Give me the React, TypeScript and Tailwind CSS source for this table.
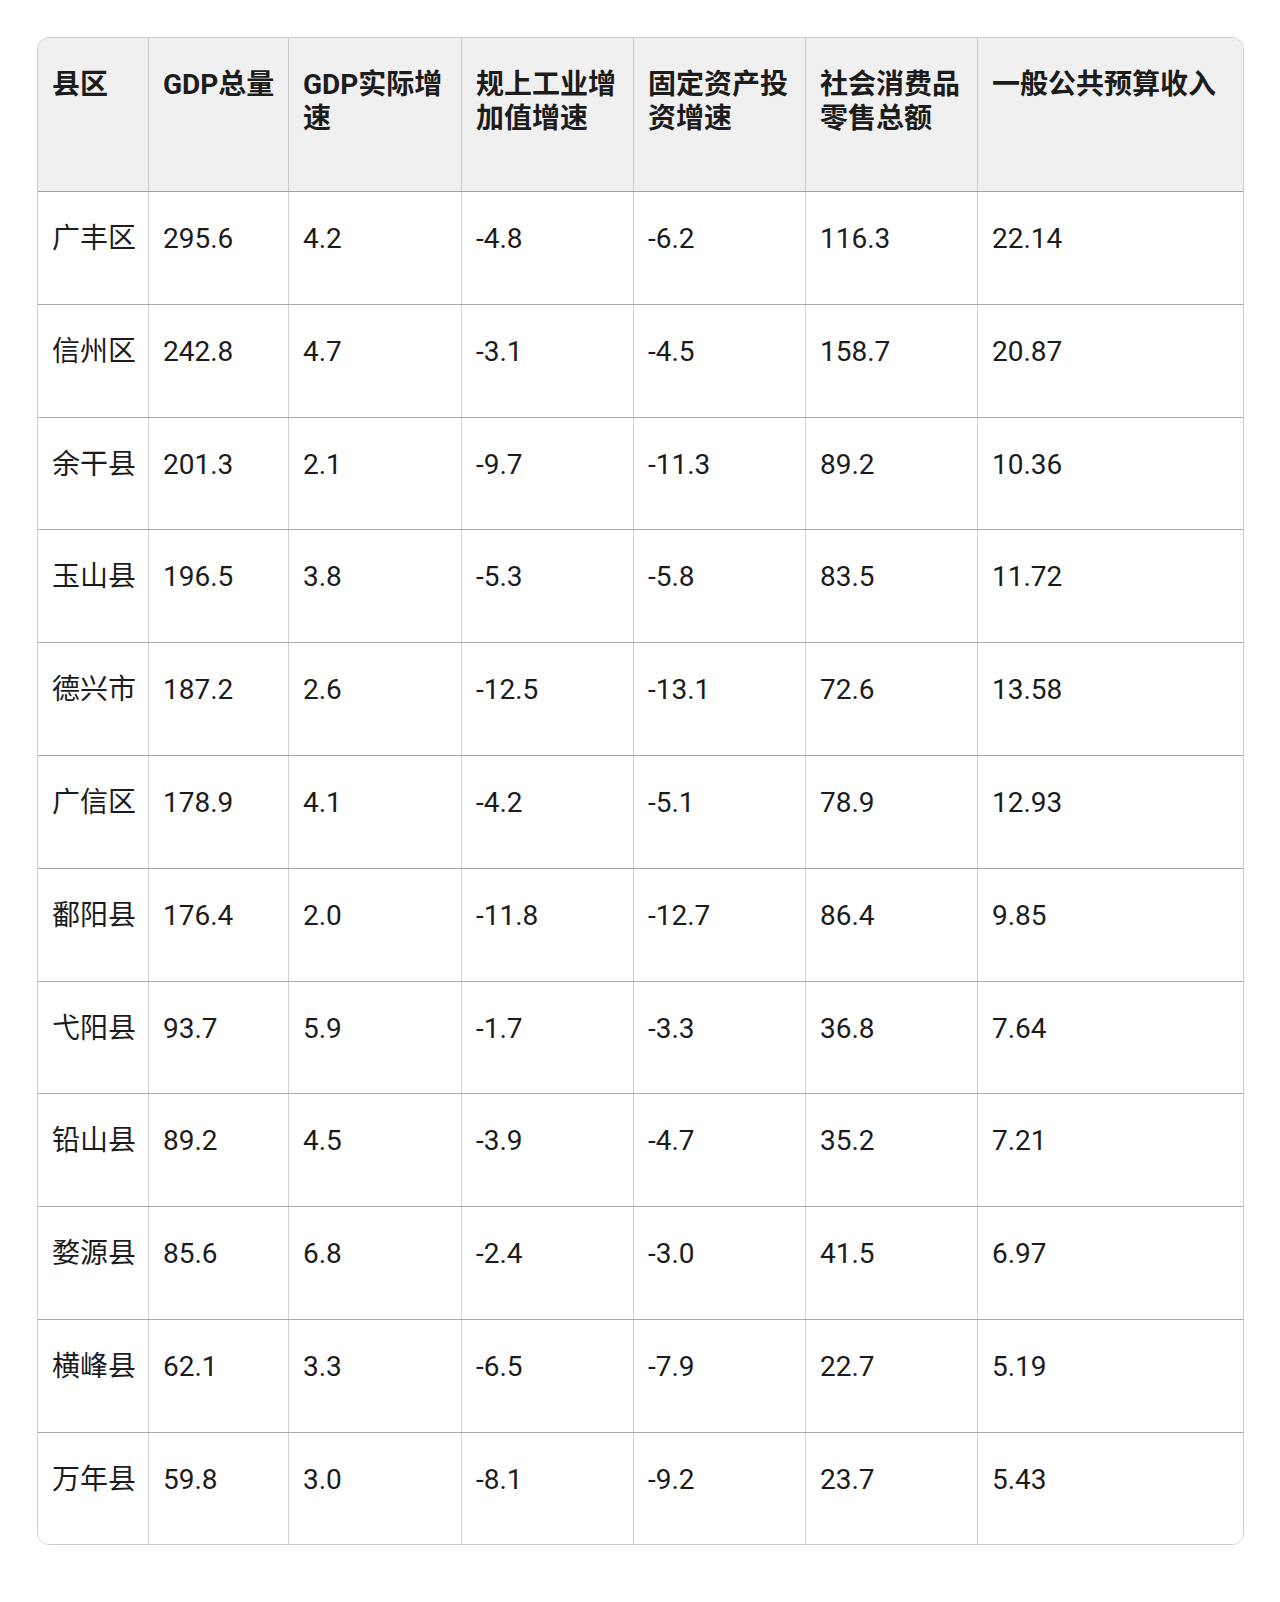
import React from "react";

const headers: string[][] = [
  ["县区"],
  ["GDP总量"],
  ["GDP实际增", "速"],
  ["规上工业增", "加值增速"],
  ["固定资产投", "资增速"],
  ["社会消费品", "零售总额"],
  ["一般公共预算收入"],
];

const rows: string[][] = [
  ["广丰区", "295.6", "4.2", "-4.8", "-6.2", "116.3", "22.14"],
  ["信州区", "242.8", "4.7", "-3.1", "-4.5", "158.7", "20.87"],
  ["余干县", "201.3", "2.1", "-9.7", "-11.3", "89.2", "10.36"],
  ["玉山县", "196.5", "3.8", "-5.3", "-5.8", "83.5", "11.72"],
  ["德兴市", "187.2", "2.6", "-12.5", "-13.1", "72.6", "13.58"],
  ["广信区", "178.9", "4.1", "-4.2", "-5.1", "78.9", "12.93"],
  ["鄱阳县", "176.4", "2.0", "-11.8", "-12.7", "86.4", "9.85"],
  ["弋阳县", "93.7", "5.9", "-1.7", "-3.3", "36.8", "7.64"],
  ["铅山县", "89.2", "4.5", "-3.9", "-4.7", "35.2", "7.21"],
  ["婺源县", "85.6", "6.8", "-2.4", "-3.0", "41.5", "6.97"],
  ["横峰县", "62.1", "3.3", "-6.5", "-7.9", "22.7", "5.19"],
  ["万年县", "59.8", "3.0", "-8.1", "-9.2", "23.7", "5.43"],
];

const grid =
  "grid grid-cols-[111px_140px_173px_172px_172px_172px_265px]";

export default function App() {
  return (
    <div
      className="min-h-[1602px] w-[1280px] bg-white pt-[37px] pl-[37px] text-[#1c1c1c]"
      style={{ fontFamily: 'Roboto, "Noto Sans CJK SC", sans-serif' }}
    >
      <div className="w-[1207px] overflow-hidden rounded-[12px] border border-[#cdcdcd] text-[28px] leading-[1.2]">
        <div className={`${grid} h-[154px] border-b border-[#a0a0a0] bg-[#f0f0f0] font-bold`}>
          {headers.map((h, i) => (
            <div
              key={i}
              className={`pl-[14px] pt-[30px] ${i < 6 ? "border-r border-[#cbcbcb]" : ""}`}
            >
              {h.map((line, j) => (
                <div key={j} className="whitespace-nowrap">
                  {line}
                </div>
              ))}
            </div>
          ))}
        </div>
        {rows.map((r, ri) => (
          <div
            key={ri}
            className={`${grid} ${ri < rows.length - 1 ? "h-[112.8px] border-b border-[#a8a8a8]" : "h-[111px]"} bg-white`}
          >
            {r.map((c, ci) => (
              <div
                key={ci}
                className={`pl-[14px] pt-[30px] whitespace-nowrap ${ci < 6 ? "border-r border-[#d0d0d0]" : ""}`}
              >
                {c}
              </div>
            ))}
          </div>
        ))}
      </div>
    </div>
  );
}
